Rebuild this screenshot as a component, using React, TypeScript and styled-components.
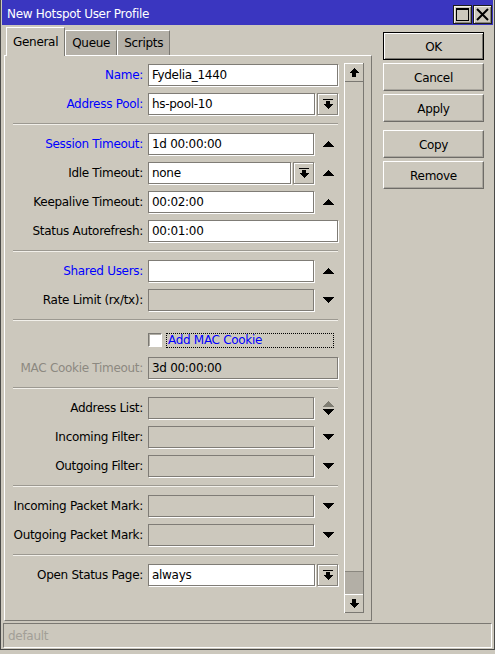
import styled, { createGlobalStyle } from "styled-components";

const GlobalStyle = createGlobalStyle`
  html, body {
    margin: 0;
    padding: 0;
    background: #ccc8bd;
  }
  body {
    font-family: "DejaVu Sans", "Liberation Sans", sans-serif;
    font-size: 12px;
    letter-spacing: -0.3px;
    color: #000;
  }
`;

const Window = styled.div`
  width: 495px;
  box-sizing: border-box;
  border: 1px solid #4a4a48;
  border-top: none;
  padding: 0 1px 1px;
  background: #ccc8bd;
  display: flex;
  flex-direction: column;
`;

const TitleBar = styled.div`
  height: 25px;
  flex: none;
  background: #3a36c0;
  color: #fff;
  display: flex;
  align-items: center;
  padding: 0 1px 0 5px;
`;

const Title = styled.span`
  flex: 1;
  padding-top: 3px;
`;

const TitleButton = styled.div`
  width: 19px;
  height: 19px;
  box-sizing: border-box;
  margin-top: 3px;
  border: 1px solid #1c1c1c;
  background: #ccc8bd;
  box-shadow: inset 1px 1px #f4f2ec, inset -1px -1px #8a877f;
  display: flex;
  align-items: center;
  justify-content: center;
  & + & {
    margin-left: 1px;
  }
`;

const Body = styled.div`
  display: flex;
  align-items: flex-start;
  gap: 11px;
  padding-left: 2px;
`;

const LeftColumn = styled.div`
  width: 368px;
  display: flex;
  flex-direction: column;
`;

const Tabs = styled.div`
  height: 28px;
  margin-top: 2px;
  padding-left: 2px;
  display: flex;
  align-items: flex-end;
`;

const Tab = styled.div<{ $active?: boolean }>`
  height: ${(p) => (p.$active ? "29px" : "25px")};
  box-sizing: border-box;
  padding: 0 6px;
  display: flex;
  align-items: center;
  border: 1px solid;
  border-color: #fff #7a7872 transparent #fff;
  border-bottom: none;
  background: ${(p) => (p.$active ? "#ccc8bd" : "#b5b1a8")};
  margin-bottom: ${(p) => (p.$active ? "-1px" : "0")};
  position: relative;
  z-index: ${(p) => (p.$active ? 1 : 0)};
  padding-bottom: ${(p) => (p.$active ? "1px" : "0")};
`;

const Panel = styled.div`
  height: 566px;
  box-sizing: border-box;
  border: 1px solid;
  border-color: #fff #7a7872 #7a7872 #fff;
  padding: 7px;
  display: flex;
  gap: 6px;
`;

const Form = styled.div`
  width: 326px;
  padding-top: 1px;
  display: flex;
  flex-direction: column;
`;

const Section = styled.div`
  display: flex;
  flex-direction: column;
  gap: 7px;
`;

const Divider = styled.div`
  height: 0;
  margin: 8px 0 8px 1px;
  border-top: 1px solid #9c9991;
  border-bottom: 1px solid #f2f0ea;
`;

const Row = styled.div<{ $short?: boolean }>`
  display: grid;
  grid-template-columns: 131px 190px;
  column-gap: 5px;
  align-items: center;
  height: ${(p) => (p.$short ? "21px" : "22px")};
`;

const Label = styled.div<{ $tone?: "link" | "disabled" }>`
  text-align: right;
  white-space: nowrap;
  color: ${(p) =>
    p.$tone === "link" ? "#0000ff" : p.$tone === "disabled" ? "#8c8981" : "#000"};
`;

const Field = styled.div`
  display: flex;
  align-items: center;
  height: 22px;
`;

const TextBox = styled.div<{ $disabled?: boolean }>`
  flex: 1;
  min-width: 0;
  height: 22px;
  box-sizing: border-box;
  padding: 0 3px;
  display: flex;
  align-items: center;
  white-space: nowrap;
  overflow: hidden;
  border: 1px solid #7f7c76;
  box-shadow: 1px 1px 0 #fff;
  background: ${(p) => (p.$disabled ? "#ccc8bd" : "#fff")};
`;

const DropButton = styled.div`
  width: 21px;
  height: 22px;
  flex: none;
  margin-left: 2px;
  box-sizing: border-box;
  border: 1px solid #86837c;
  box-shadow: 1px 1px 0 #fff, inset 1px 1px #fff;
  display: flex;
  align-items: center;
  justify-content: center;
`;

const ArrowSlot = styled.div`
  width: 24px;
  flex: none;
  padding-right: 4px;
  box-sizing: border-box;
  display: flex;
  flex-direction: column;
  align-items: flex-end;
  justify-content: center;
  gap: 2px;
`;

const CheckBox = styled.div`
  width: 14px;
  height: 14px;
  box-sizing: border-box;
  flex: none;
  background: #fff;
  border: 1px solid;
  border-color: #7a7872 #fff #fff #7a7872;
  box-shadow: inset 1px 1px #b0ada5;
`;

const CheckLabel = styled.div`
  flex: 1;
  height: 15px;
  box-sizing: border-box;
  margin: 0 4px;
  padding-left: 1px;
  border: 1px dotted #000;
  color: #0000ff;
  display: flex;
  align-items: center;
  white-space: nowrap;
`;

const Scrollbar = styled.div`
  width: 20px;
  box-sizing: border-box;
  display: flex;
  flex-direction: column;
  border-left: 1px solid #fff;
  border-right: 1px solid #7a7872;
`;

const ScrollButton = styled.div`
  height: 19px;
  flex: none;
  box-sizing: border-box;
  border-top: 1px solid #fff;
  border-bottom: 1px solid #7a7872;
  display: flex;
  align-items: center;
  justify-content: center;
`;

const Track = styled.div`
  flex: 1;
`;

const Thumb = styled.div`
  height: 23px;
  flex: none;
  box-sizing: border-box;
  background: #b3afa6;
  border-top: 1px solid #8a877f;
`;

const ButtonColumn = styled.div`
  width: 101px;
  padding-top: 7px;
  display: flex;
  flex-direction: column;
  gap: 3px;
`;

const Button = styled.div<{ $default?: boolean; $spaced?: boolean }>`
  height: 28px;
  box-sizing: border-box;
  display: flex;
  align-items: center;
  justify-content: center;
  padding-top: 1px;
  margin-top: ${(p) => (p.$spaced ? "5px" : "0")};
  border: 1px solid;
  border-color: ${(p) => (p.$default ? "#000" : "#fff #6e6c67 #6e6c67 #fff")};
  box-shadow: ${(p) =>
    p.$default ? "inset 1px 1px #fff, inset -1px -1px #7a7872" : "inset -1px -1px #a9a69e"};
`;

const StatusBar = styled.div`
  height: 25px;
  margin: 2px 1px 0;
  box-sizing: border-box;
  border: 1px solid;
  border-color: #7a7872 #fff #fff #7a7872;
  padding-left: 4px;
  padding-top: 1px;
  display: flex;
  align-items: center;
  color: #a29f97;
`;

const TriUp = ({ color = "#000" }: { color?: string }) => (
  <svg width="12" height="6" viewBox="0 0 12 6" shapeRendering="crispEdges">
    <polygon points="0,6 12,6 6,0" fill={color} />
  </svg>
);

const TriDown = ({ color = "#000" }: { color?: string }) => (
  <svg width="12" height="6" viewBox="0 0 12 6" shapeRendering="crispEdges">
    <polygon points="0,0 12,0 6,6" fill={color} />
  </svg>
);

const DropIcon = () => (
  <svg width="10" height="11" viewBox="0 0 10 11" shapeRendering="crispEdges">
    <rect x="0" y="0" width="10" height="1" fill="#000" />
    <rect x="3" y="2" width="4" height="3" fill="#000" />
    <polygon points="0,5 10,5 5,10" fill="#000" />
  </svg>
);

const ScrollArrow = ({ down }: { down?: boolean }) => (
  <svg width="10" height="9" viewBox="0 0 10 9" shapeRendering="crispEdges">
    <g transform={down ? "rotate(180 5 4.5)" : undefined}>
      <polygon points="5,0 10,5 7,5 7,9 3,9 3,5 0,5" fill="#000" />
    </g>
  </svg>
);

type Arrow = "up" | "down" | "both";

type FieldRowProps = {
  label: string;
  tone?: "link" | "disabled";
  value?: string;
  disabled?: boolean;
  drop?: boolean;
  arrow?: Arrow;
};

function FieldRow({ label, tone, value = "", disabled, drop, arrow }: FieldRowProps) {
  return (
    <Row>
      <Label $tone={tone}>{label}</Label>
      <Field>
        <TextBox $disabled={disabled}>{value}</TextBox>
        {drop && (
          <DropButton>
            <DropIcon />
          </DropButton>
        )}
        {arrow && (
          <ArrowSlot>
            {arrow === "up" && <TriUp />}
            {arrow === "down" && <TriDown />}
            {arrow === "both" && (
              <>
                <TriUp color="#7f7d72" />
                <TriDown />
              </>
            )}
          </ArrowSlot>
        )}
      </Field>
    </Row>
  );
}

export default function App() {
  return (
    <>
      <GlobalStyle />
      <Window>
        <TitleBar>
          <Title>New Hotspot User Profile</Title>
          <TitleButton>
            <svg width="13" height="13" viewBox="0 0 13 13" shapeRendering="crispEdges">
              <rect x="0.5" y="0.5" width="12" height="12" fill="none" stroke="#000" />
              <rect x="0" y="0" width="13" height="2" fill="#000" />
            </svg>
          </TitleButton>
          <TitleButton>
            <svg width="13" height="13" viewBox="0 0 13 13">
              <path d="M1 1 L12 12 M12 1 L1 12" stroke="#000" strokeWidth="2" />
            </svg>
          </TitleButton>
        </TitleBar>

        <Body>
          <LeftColumn>
            <Tabs>
              <Tab $active>General</Tab>
              <Tab>Queue</Tab>
              <Tab>Scripts</Tab>
            </Tabs>
            <Panel>
              <Form>
                <Section>
                  <FieldRow label="Name:" tone="link" value="Fydelia_1440" />
                  <FieldRow label="Address Pool:" tone="link" value="hs-pool-10" drop />
                </Section>
                <Divider />
                <Section>
                  <FieldRow label="Session Timeout:" tone="link" value="1d 00:00:00" arrow="up" />
                  <FieldRow label="Idle Timeout:" value="none" drop arrow="up" />
                  <FieldRow label="Keepalive Timeout:" value="00:02:00" arrow="up" />
                  <FieldRow label="Status Autorefresh:" value="00:01:00" />
                </Section>
                <Divider />
                <Section>
                  <FieldRow label="Shared Users:" tone="link" arrow="up" />
                  <FieldRow label="Rate Limit (rx/tx):" disabled arrow="down" />
                </Section>
                <Divider />
                <Section>
                  <Row $short>
                    <span />
                    <Field>
                      <CheckBox />
                      <CheckLabel>Add MAC Cookie</CheckLabel>
                    </Field>
                  </Row>
                  <FieldRow label="MAC Cookie Timeout:" tone="disabled" value="3d 00:00:00" disabled />
                </Section>
                <Divider />
                <Section>
                  <FieldRow label="Address List:" disabled arrow="both" />
                  <FieldRow label="Incoming Filter:" disabled arrow="down" />
                  <FieldRow label="Outgoing Filter:" disabled arrow="down" />
                </Section>
                <Divider />
                <Section>
                  <FieldRow label="Incoming Packet Mark:" disabled arrow="down" />
                  <FieldRow label="Outgoing Packet Mark:" disabled arrow="down" />
                </Section>
                <Divider />
                <Section>
                  <FieldRow label="Open Status Page:" value="always" drop />
                </Section>
              </Form>
              <Scrollbar>
                <ScrollButton>
                  <ScrollArrow />
                </ScrollButton>
                <Track />
                <Thumb />
                <ScrollButton>
                  <ScrollArrow down />
                </ScrollButton>
              </Scrollbar>
            </Panel>
          </LeftColumn>

          <ButtonColumn>
            <Button $default>OK</Button>
            <Button>Cancel</Button>
            <Button>Apply</Button>
            <Button $spaced>Copy</Button>
            <Button>Remove</Button>
          </ButtonColumn>
        </Body>

        <StatusBar>default</StatusBar>
      </Window>
    </>
  );
}
